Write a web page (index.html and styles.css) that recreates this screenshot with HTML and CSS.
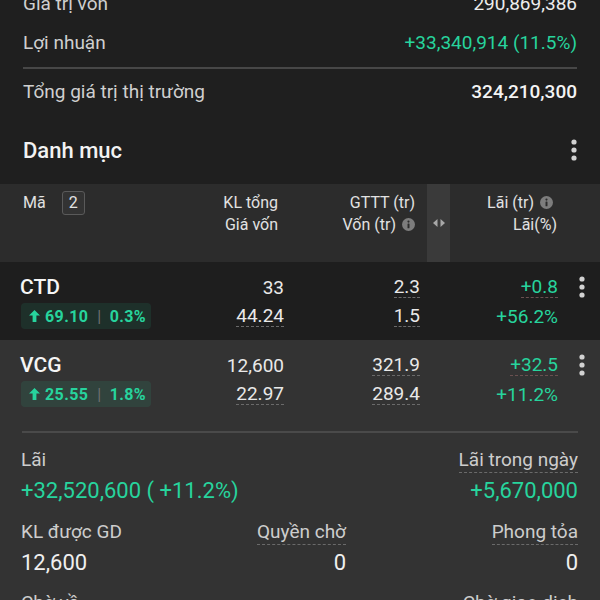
FILE: index.html
```html
<!DOCTYPE html>
<html lang="vi">
<head>
<meta charset="utf-8">
<title>Danh mục</title>
<link rel="stylesheet" href="styles.css">
</head>
<body>
<div class="page">
  <section class="top">
    <div class="summary">
      <div class="srow"><span class="lbl">Giá trị vốn</span><span class="val">290,869,386</span></div>
      <div class="srow"><span class="lbl">Lợi nhuận</span><span class="val up">+33,340,914 (11.5%)</span></div>
      <div class="divider"></div>
      <div class="srow"><span class="lbl">Tổng giá trị thị trường</span><span class="val strong">324,210,300</span></div>
    </div>
    <div class="titlebar">
      <h2 class="title">Danh mục</h2>
      <svg class="kebab" width="6" height="22" viewBox="0 0 6 22"><circle cx="3" cy="3" r="2.6"/><circle cx="3" cy="11" r="2.6"/><circle cx="3" cy="19" r="2.6"/></svg>
    </div>
  </section>

  <div class="thead">
    <div class="th th-sym"><span>Mã</span><span class="count">2</span></div>
    <div class="th"><div>KL tổng</div><div>Giá vốn</div></div>
    <div class="th"><div>GTTT (tr)</div><div>Vốn (tr)<svg class="info" width="13" height="13" viewBox="0 0 12 12"><circle class="ring" cx="6" cy="6" r="6"/><rect class="i" x="5.1" y="5" width="1.8" height="4.5" rx="0.5"/><circle class="i" cx="6" cy="3.3" r="1"/></svg></div></div>
    <div></div>
    <div class="band"><svg width="12" height="8" viewBox="0 0 12 8"><path d="M0 4 L4.5 0 V8 Z M12 4 L7.5 0 V8 Z"/></svg></div>
    <div class="th"><div class="pr">Lãi (tr)<svg class="info" width="13" height="13" viewBox="0 0 12 12"><circle class="ring" cx="6" cy="6" r="6"/><rect class="i" x="5.1" y="5" width="1.8" height="4.5" rx="0.5"/><circle class="i" cx="6" cy="3.3" r="1"/></svg></div><div>Lãi(%)</div></div>
  </div>

  <div class="trow dark">
    <div class="cell sym">
      <div class="line"><span class="code">CTD</span></div>
      <div class="line"><span class="pill"><svg class="arrow" width="11" height="12" viewBox="0 0 11 12"><path d="M5.5 0 L11 5.6 H7.4 V12 H3.6 V5.6 H0 Z"/></svg>69.10<span class="sep">|</span>0.3%</span></div>
    </div>
    <div class="cell num">
      <div class="line">33</div>
      <div class="line"><span class="dash">44.24</span></div>
    </div>
    <div class="cell num">
      <div class="line"><span class="dash">2.3</span></div>
      <div class="line"><span class="dash">1.5</span></div>
    </div>
    <div class="cell num up">
      <div class="line"><span class="dash red">+0.8</span></div>
      <div class="line">+56.2%</div>
    </div>
    <div class="cell more">
      <div class="line"><svg class="kebab" width="6" height="22" viewBox="0 0 6 22"><circle cx="3" cy="3" r="2.6"/><circle cx="3" cy="11" r="2.6"/><circle cx="3" cy="19" r="2.6"/></svg></div>
    </div>
  </div>

  <div class="trow">
    <div class="cell sym">
      <div class="line"><span class="code">VCG</span></div>
      <div class="line"><span class="pill"><svg class="arrow" width="11" height="12" viewBox="0 0 11 12"><path d="M5.5 0 L11 5.6 H7.4 V12 H3.6 V5.6 H0 Z"/></svg>25.55<span class="sep">|</span>1.8%</span></div>
    </div>
    <div class="cell num">
      <div class="line">12,600</div>
      <div class="line"><span class="dash">22.97</span></div>
    </div>
    <div class="cell num">
      <div class="line"><span class="dash">321.9</span></div>
      <div class="line"><span class="dash">289.4</span></div>
    </div>
    <div class="cell num up">
      <div class="line"><span class="dash red">+32.5</span></div>
      <div class="line">+11.2%</div>
    </div>
    <div class="cell more">
      <div class="line"><svg class="kebab" width="6" height="22" viewBox="0 0 6 22"><circle cx="3" cy="3" r="2.6"/><circle cx="3" cy="11" r="2.6"/><circle cx="3" cy="19" r="2.6"/></svg></div>
    </div>
  </div>

  <section class="stats">
    <div class="divider"></div>
    <div class="grid two g1">
      <div class="lbl">Lãi</div>
      <div class="lbl right"><span class="dash">Lãi trong ngày</span></div>
      <div class="big up">+32,520,600 ( +11.2%)</div>
      <div class="big up right">+5,670,000</div>
    </div>
    <div class="grid three g2">
      <div class="lbl">KL được GD</div>
      <div class="lbl right"><span class="dash">Quyền chờ</span></div>
      <div class="lbl right"><span class="dash">Phong tỏa</span></div>
      <div class="big">12,600</div>
      <div class="big right">0</div>
      <div class="big right">0</div>
    </div>
    <div class="grid two g3">
      <div class="lbl">Chờ về</div>
      <div class="lbl right"><span class="dash">Chờ giao dịch</span></div>
    </div>
  </section>
</div>
</body>
</html>
```
FILE: styles.css
```css
* { box-sizing: border-box; }
html, body { margin: 0; padding: 0; }
body {
  background: #333333;
  font-family: Roboto, "Noto Sans", "Liberation Sans", sans-serif;
  color: #ececec;
}
.page { width: 600px; height: 600px; overflow: hidden; background: #333333; }

.up { color: #27d49d; }

/* top summary */
.top { background: #1f1f1f; display: flow-root; }
.summary { margin-top: -16px; padding: 0 23px; }
.srow {
  height: 39px;
  display: flex;
  justify-content: space-between;
  align-items: center;
  font-size: 19px;
}
.srow .lbl { color: #cfcfcf; }
.srow .val { color: #ededed; }
.srow .val.up { color: #27d49d; }
.srow .val.strong { font-weight: 500; color: #f4f4f4; }
.summary .divider { height: 2px; background: #474747; margin: 5px 0 3px; }

.titlebar {
  height: 73px;
  padding: 5px 23px 0 23px;
  display: flex;
  justify-content: space-between;
  align-items: center;
}
.title { margin: 0; font-size: 22px; font-weight: 500; color: #f2f2f2; }
.kebab { fill: #d2d2d2; display: block; }

/* table header */
.thead {
  background: #2c2c2c;
  height: 78px;
  display: grid;
  grid-template-columns: 155px 100px 137px 12px 23px 107px;
  padding-left: 23px;
  padding-right: 43px;
  font-size: 16px;
  color: #e2e2e2;
}
.th { padding-top: 8px; line-height: 22px; text-align: right; }
.th .pr { padding-right: 4px; }
.th-sym {
  display: flex;
  align-items: center;
  gap: 16px;
  height: 24px;
  margin-top: 7px;
  padding-top: 0;
  text-align: left;
}
.count {
  width: 23px;
  height: 24px;
  border: 1px solid #5a5a5a;
  border-radius: 3px;
  background: #333;
  display: flex;
  align-items: center;
  justify-content: center;
  font-size: 16px;
}
.info { margin-left: 6px; vertical-align: -1px; }
.info .ring { fill: #7d7d7d; }
.info .i { fill: #2c2c2c; }
.band {
  background: #3a3a3a;
  display: flex;
  align-items: center;
  justify-content: center;
  fill: #a8a8a8;
}

/* table rows */
.trow {
  display: grid;
  grid-template-columns: 166px 100px 136px 138px 42px;
  padding: 12px 0 11px 18px;
  background: #333333;
}
.trow.dark { background: #1e1e1e; }
.cell { display: flex; flex-direction: column; gap: 3px; }
.line { height: 26px; display: flex; align-items: center; }
.num .line { justify-content: flex-end; font-size: 19px; color: #e9e9e9; }
.num.up .line { color: #27d49d; }
.code { font-size: 21px; font-weight: 500; color: #f5f5f5; padding-left: 2px; }
.pill {
  height: 26px;
  display: inline-flex;
  align-items: center;
  margin-left: 3px;
  padding: 0 5px 0 8px;
  border-radius: 4px;
  background: rgba(39, 212, 157, 0.1);
  color: #27d49d;
  font-size: 16px;
  letter-spacing: 0.4px;
  font-weight: 700;
}
.arrow { fill: #27d49d; margin-right: 5px; }
.sep { color: #6f6f6f; font-weight: 400; margin: 0 8px 0 9px; }
.dash {
  border-bottom: 1px dashed #6a6a6a;
  line-height: 21px;
}
.dash.red { border-bottom-color: #6a5050; }
.more .line { justify-content: flex-end; padding-right: 15px; }

/* stats */
.stats { padding: 13px 22px 0 21px; }
.stats .divider { height: 2px; background: #4a4a4a; margin-left: 1px; }
.grid { display: grid; }
.grid.two { grid-template-columns: 1fr 1fr; }
.grid.three { grid-template-columns: 140px 185px 1fr; }
.g1 { margin-top: 14px; }
.g2 { margin-top: 13px; }
.g3 { margin-top: 12px; }
.stats .lbl { font-size: 19px; line-height: 26px; height: 26px; color: #cdcdcd; margin-bottom: 3px; }
.stats .big { font-size: 22px; line-height: 30px; color: #efefef; }
.stats .big.up { color: #27d49d; }
.right { text-align: right; }
.stats .dash { line-height: 24px; display: inline-block; }
```
